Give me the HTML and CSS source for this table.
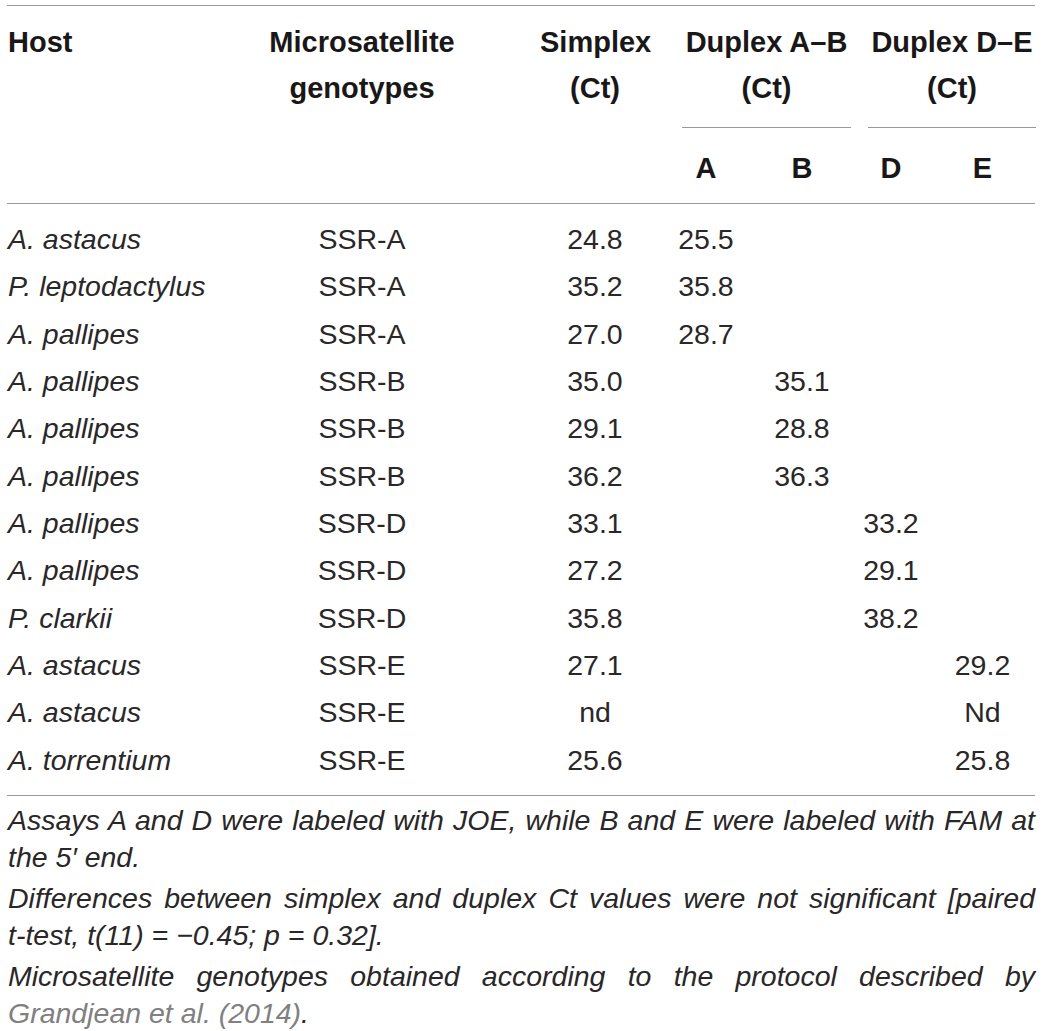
FILE: index.html
```html
<!DOCTYPE html>
<html lang="en">
<head>
<meta charset="utf-8">
<title>Table</title>
<link rel="stylesheet" href="styles.css">
</head>
<body>
<div class="page">
  <table class="data">
    <colgroup>
      <col class="c-host">
      <col class="c-micro">
      <col class="c-simplex">
      <col class="c-a">
      <col class="c-b">
      <col class="c-d">
      <col class="c-e">
    </colgroup>
    <thead>
      <tr class="head1">
        <th rowspan="2" class="host">Host</th>
        <th rowspan="2" class="micro">Microsatellite<br>genotypes</th>
        <th rowspan="2" class="simplex">Simplex<br>(Ct)</th>
        <th colspan="2" class="group"><div class="grp grp-ab">Duplex A–B<br>(Ct)</div></th>
        <th colspan="2" class="group"><div class="grp grp-de">Duplex D–E<br>(Ct)</div></th>
      </tr>
      <tr class="head2">
        <th class="sub">A</th>
        <th class="sub">B</th>
        <th class="sub">D</th>
        <th class="sub">E</th>
      </tr>
    </thead>
    <tbody>
      <tr><td class="host">A. astacus</td><td class="micro">SSR-A</td><td class="simplex">24.8</td><td>25.5</td><td></td><td></td><td></td></tr>
      <tr><td class="host">P. leptodactylus</td><td class="micro">SSR-A</td><td class="simplex">35.2</td><td>35.8</td><td></td><td></td><td></td></tr>
      <tr><td class="host">A. pallipes</td><td class="micro">SSR-A</td><td class="simplex">27.0</td><td>28.7</td><td></td><td></td><td></td></tr>
      <tr><td class="host">A. pallipes</td><td class="micro">SSR-B</td><td class="simplex">35.0</td><td></td><td>35.1</td><td></td><td></td></tr>
      <tr><td class="host">A. pallipes</td><td class="micro">SSR-B</td><td class="simplex">29.1</td><td></td><td>28.8</td><td></td><td></td></tr>
      <tr><td class="host">A. pallipes</td><td class="micro">SSR-B</td><td class="simplex">36.2</td><td></td><td>36.3</td><td></td><td></td></tr>
      <tr><td class="host">A. pallipes</td><td class="micro">SSR-D</td><td class="simplex">33.1</td><td></td><td></td><td>33.2</td><td></td></tr>
      <tr><td class="host">A. pallipes</td><td class="micro">SSR-D</td><td class="simplex">27.2</td><td></td><td></td><td>29.1</td><td></td></tr>
      <tr><td class="host">P. clarkii</td><td class="micro">SSR-D</td><td class="simplex">35.8</td><td></td><td></td><td>38.2</td><td></td></tr>
      <tr><td class="host">A. astacus</td><td class="micro">SSR-E</td><td class="simplex">27.1</td><td></td><td></td><td></td><td>29.2</td></tr>
      <tr><td class="host">A. astacus</td><td class="micro">SSR-E</td><td class="simplex">nd</td><td></td><td></td><td></td><td>Nd</td></tr>
      <tr><td class="host">A. torrentium</td><td class="micro">SSR-E</td><td class="simplex">25.6</td><td></td><td></td><td></td><td>25.8</td></tr>
    </tbody>
  </table>
  <div class="notes">
    <p>Assays A and D were labeled with JOE, while B and E were labeled with FAM at the 5′ end.</p>
    <p>Differences between simplex and duplex Ct values were not significant [paired <span class="nw">t-test,</span> t(11) = −0.45; p = 0.32].</p>
    <p>Microsatellite genotypes obtained according to the protocol described by <a class="ref" href="#">Grandjean et al. (2014)</a>.</p>
  </div>
</div>
</body>
</html>
```
FILE: styles.css
```css
html, body {
  margin: 0;
  padding: 0;
  background: #ffffff;
}

.page {
  padding: 5px 0 0 7px;
  width: 1028px;
  font-family: "Liberation Sans", Arial, Helvetica, sans-serif;
  font-size: 28.5px;
  color: #2a2728;
}

.data {
  width: 1028px;
  table-layout: fixed;
  border-collapse: separate;
  border-spacing: 0;
  border-top: 1px solid #9a9a9a;
  border-bottom: 1px solid #9a9a9a;
}

.c-host { width: 243px; }
.c-micro { width: 290px; }
.c-simplex { width: 120px; }
.c-a { width: 92px; }
.c-b { width: 100px; }
.c-d { width: 78px; }
.c-e { width: 105px; }

th {
  font-weight: bold;
  font-size: 29px;
  color: #1a1718;
  line-height: 46px;
  vertical-align: top;
  text-align: center;
  padding: 0;
  white-space: nowrap;
}

.head1 th {
  padding-top: 13px;
}

.head1 th.host,
.head1 th.micro,
.head1 th.simplex,
.head2 th {
  border-bottom: 1px solid #9a9a9a;
}

.head2 th {
  padding-top: 17px;
  padding-bottom: 12px;
}

th.host, td.host {
  text-align: left;
  padding-left: 1px;
}

th.micro, td.micro {
  padding-right: 66px;
}

th.simplex, td.simplex {
  padding-right: 10px;
}

.grp {
  padding-bottom: 16px;
  border-bottom: 1px solid #9a9a9a;
}

.grp-ab {
  margin-left: 22px;
  margin-right: 1px;
}

.grp-de {
  margin-left: 16px;
  margin-right: -1px;
}

td {
  line-height: 47.33px;
  text-align: center;
  padding: 0;
  vertical-align: top;
  white-space: nowrap;
}

td.host {
  font-style: italic;
}

tbody tr:first-child td {
  padding-top: 12px;
}

tbody tr:last-child td {
  padding-bottom: 11px;
}

.notes {
  padding-top: 6px;
}

.notes p {
  margin: 0 0 4px 0;
  font-style: italic;
  line-height: 37px;
  text-align: justify;
  padding-left: 1px;
}

.nw {
  white-space: nowrap;
}

.ref {
  color: #808080;
  text-decoration: none;
}
```
